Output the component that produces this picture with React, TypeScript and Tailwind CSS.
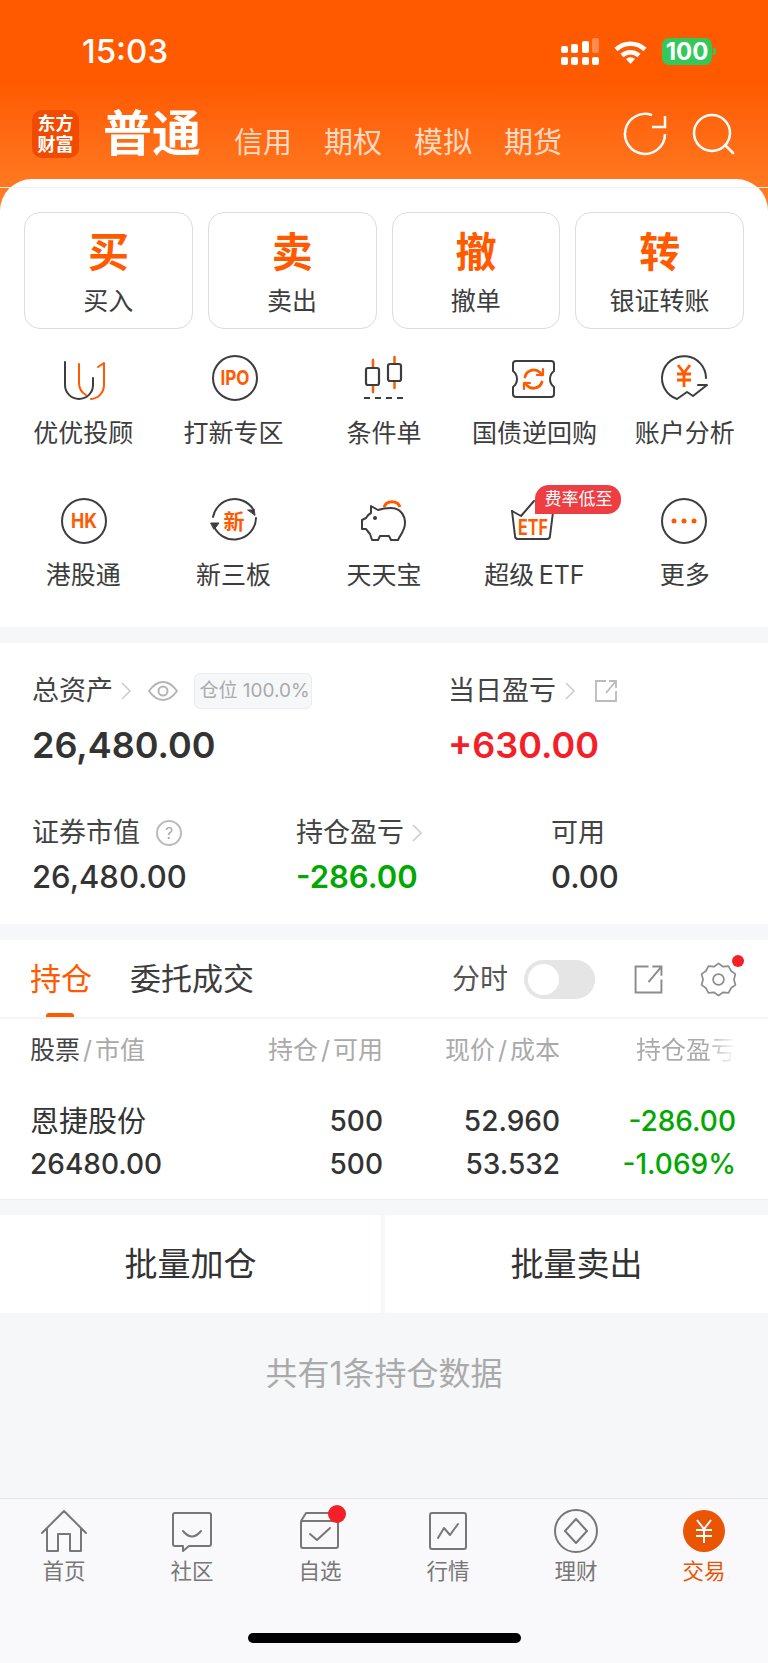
import { type ReactNode } from 'react';

const ink = '#3d3d3d';
const orange = '#ff5a00';
const gray = '#777777';

function Icon({ size = 48, children }: { size?: number; children: ReactNode }) {
    return (
        <svg width={size} height={size} viewBox={`0 0 ${size} ${size}`} fill="none" strokeLinecap="round" strokeLinejoin="round" overflow="visible">
            {children}
        </svg>
    );
}

function Glyph({ x = 24, y = 24, size, width, children }: { x?: number; y?: number; size: number; width?: number; children: string }) {
    return (
        <text
            x={x}
            y={y}
            fontSize={size}
            fontWeight={700}
            fill={orange}
            textAnchor="middle"
            dominantBaseline="central"
            fontFamily="Inter, 'Noto Sans CJK SC', sans-serif"
            textLength={width}
            lengthAdjust={width ? 'spacingAndGlyphs' : undefined}
        >
            {children}
        </text>
    );
}

function Chevron() {
    return (
        <svg width="12" height="22" viewBox="0 0 12 22" fill="none" stroke="#cccccc" strokeWidth="1.6">
            <path d="M2 3l8 8-8 8" />
        </svg>
    );
}

function ShareIcon({ size, color }: { size: number; color: string }) {
    return (
        <svg width={size} height={size} viewBox="0 0 24 24" fill="none" stroke={color} strokeWidth={size > 26 ? 1.5 : 1.8}>
            <path d="M12 2H2v20h20V12" />
            <path d="M12 14L22 2M15 2h7v7" />
        </svg>
    );
}

const shortcuts = [
    { big: '买', label: '买入' },
    { big: '卖', label: '卖出' },
    { big: '撤', label: '撤单' },
    { big: '转', label: '银证转账' },
];

const tools: { label: string; badge?: string; icon: ReactNode }[] = [
    {
        label: '优优投顾',
        icon: (
            <Icon>
                <path d="M6 7V30a14 14 0 0 0 28 0V23" stroke={ink} strokeWidth="2" />
                <path d="M20 9V28q0 8 7 12" stroke={orange} strokeWidth="2" />
                <path d="M39 12l6-4V30a14 14 0 0 1-13 14" stroke={orange} strokeWidth="2" />
            </Icon>
        ),
    },
    {
        label: '打新专区',
        icon: (
            <Icon>
                <circle cx="25" cy="23" r="22" stroke={ink} strokeWidth="2" />
                <Glyph x={25} y={23} size={20} width={29}>IPO</Glyph>
            </Icon>
        ),
    },
    {
        label: '条件单',
        icon: (
            <Icon>
                <path d="M13 5V37M34.500 2V33" stroke={orange} strokeWidth="2.500" />
                <rect x="6" y="13" width="13" height="17" rx="2" fill="white" stroke={ink} strokeWidth="2.200" />
                <rect x="28" y="9" width="13" height="17" rx="2" fill="white" stroke={ink} strokeWidth="2.200" />
                <path d="M4 43H44" stroke={ink} strokeWidth="2" strokeDasharray="6 5" strokeLinecap="butt" />
            </Icon>
        ),
    },
    {
        label: '国债逆回购',
        icon: (
            <Icon>
                <path d="M6 6H41q3 0 3 3v7q-4 3-4 8t4 8v7q0 3-3 3H6q-3 0-3-3v-7q4-3 4-8t-4-8V9q0-3 3-3z" stroke={ink} strokeWidth="2" />
                <path d="M15 22a9 9 0 0 1 15-4.500l2 2.500" stroke={orange} strokeWidth="2.800" />
                <path d="M32 27a9 9 0 0 1-15 3.500l-2-2.500" stroke={orange} strokeWidth="2.800" />
                <path d="M33 14v6h-6M14 34v-6h6" stroke={orange} strokeWidth="2.200" />
            </Icon>
        ),
    },
    {
        label: '账户分析',
        icon: (
            <Icon>
                <path d="M45 23A22 22 0 1 0 16 44L26 37L32 41L46 30H37" stroke={ink} strokeWidth="2" />
                <path d="M17 10l6 8 6-8M23 18V32M16 19H30M16 25H30" stroke={orange} strokeWidth="2.800" strokeLinecap="butt" strokeLinejoin="miter" />
            </Icon>
        ),
    },
    {
        label: '港股通',
        icon: (
            <Icon>
                <circle cx="25" cy="24" r="22" stroke={ink} strokeWidth="2" />
                <Glyph x={25} y={24} size={20} width={26}>HK</Glyph>
            </Icon>
        ),
    },
    {
        label: '新三板',
        icon: (
            <Icon>
                <path d="M3 27A22 22 0 0 0 46 21" stroke={ink} strokeWidth="2" />
                <path d="M3 20A22 22 0 0 1 43 12" stroke={ink} strokeWidth="2" />
                <path d="M38 13l6 0 0-1 1 6z" fill={ink} stroke={ink} strokeWidth="1" />
                <path d="M1 26l8 0-3 4-2 2z" fill={ink} stroke={ink} strokeWidth="1" />
                <Glyph x={24} y={24} size={21}>新</Glyph>
            </Icon>
        ),
    },
    {
        label: '天天宝',
        icon: (
            <Icon>
                <path d="M24 10a8.500 8 0 0 1 16 0" stroke={orange} strokeWidth="3" strokeLinecap="butt" />
                <path d="M11 9L18 13C22 11.500 27 11 31 11C40 11 45 18 45 26C45 32 42 36 39 41L38 43H31L29 39H20L18 43H12L10 37C8 35 7 33 6 32H2V23L6 21C7 19 9 17 11 16Z" fill="white" stroke={ink} strokeWidth="2" />
                <circle cx="15" cy="21" r="2" fill={ink} />
            </Icon>
        ),
    },
    {
        label: '超级\u2009ETF',
        badge: '费率低至',
        icon: (
            <Icon>
                <path d="M2 14L11 19L24 4" stroke={ink} strokeWidth="2" />
                <path d="M2 14L5 39q0 3 3 3H37q3 0 3-3L43 15" stroke={ink} strokeWidth="2" />
                <Glyph x={23} y={30} size={21} width={30}>ETF</Glyph>
            </Icon>
        ),
    },
    {
        label: '更多',
        icon: (
            <Icon>
                <circle cx="23" cy="24" r="22" stroke={ink} strokeWidth="2" />
                <circle cx="13" cy="24" r="2.500" fill={orange} />
                <circle cx="23" cy="24" r="2.500" fill={orange} />
                <circle cx="33" cy="24" r="2.500" fill={orange} />
            </Icon>
        ),
    },
];

const tabs: { label: string; active?: boolean; icon: ReactNode }[] = [
    {
        label: '首页',
        icon: (
            <Icon>
                <path d="M2 26L24 4L46 26M7 21V44H18V27H30V44H41V21" stroke={gray} strokeWidth="2" />
            </Icon>
        ),
    },
    {
        label: '社区',
        icon: (
            <Icon>
                <path d="M7 6H41q2 0 2 2V37q0 2-2 2H21L15 44V39H7q-2 0-2-2V8q0-2 2-2z" stroke={gray} strokeWidth="2" />
                <path d="M15 24q9 11 18 0" stroke={gray} strokeWidth="2" />
            </Icon>
        ),
    },
    {
        label: '自选',
        icon: (
            <Icon>
                <rect x="5" y="14" width="37" height="27" rx="2" stroke={gray} strokeWidth="2" />
                <path d="M5 14L10 6H40" stroke={gray} strokeWidth="2" />
                <path d="M14 27L21 33L34 21" stroke={gray} strokeWidth="2" />
                <circle cx="41" cy="7" r="9" fill="#f32027" />
            </Icon>
        ),
    },
    {
        label: '行情',
        icon: (
            <Icon>
                <rect x="6" y="6" width="36" height="36" rx="2" stroke={gray} strokeWidth="2" />
                <path d="M14 31L20 21L26 28L34 17" stroke={gray} strokeWidth="2" />
            </Icon>
        ),
    },
    {
        label: '理财',
        icon: (
            <Icon>
                <circle cx="24" cy="24" r="21" stroke={gray} strokeWidth="2" />
                <path d="M24 12L35 24L24 36L13 24Z" stroke={gray} strokeWidth="2" />
            </Icon>
        ),
    },
    {
        label: '交易',
        active: true,
        icon: (
            <Icon>
                <circle cx="24" cy="24" r="21" fill="#ea5504" />
                <path d="M17 13l7 9 7-9M24 22V36M16 23H32M16 29H32" stroke="white" strokeWidth="2" strokeLinecap="butt" strokeLinejoin="miter" />
            </Icon>
        ),
    },
];

function StatusBar() {
    return (
        <div className="flex h-[104px] items-center justify-between pb-[1px] pl-[82px] pr-[52px] text-white">
            <span className="text-[33px] font-medium leading-none">15:03</span>
            <div className="flex items-center gap-[15px]">
                <svg width="38" height="27" viewBox="0 0 38 27" fill="white">
                    <rect x="0" y="8" width="7" height="7" rx="2" />
                    <rect x="10" y="6" width="7" height="9" rx="2" />
                    <rect x="21" y="3" width="7" height="12" rx="2" />
                    <rect x="31" y="0" width="7" height="15" rx="2" fillOpacity="0.3" />
                    <rect x="0" y="19" width="7" height="8" rx="2" />
                    <rect x="10" y="19" width="7" height="8" rx="2" />
                    <rect x="21" y="19" width="7" height="8" rx="2" />
                    <rect x="31" y="19" width="7" height="8" rx="2" />
                </svg>
                <svg width="33" height="24" viewBox="0 0 33 24" fill="none" stroke="white" strokeWidth="4.500">
                    <path d="M2 9.500a21 21 0 0 1 29 0" />
                    <path d="M8 15.500a12.500 12.500 0 0 1 17 0" />
                    <path d="M16.500 24l-4.500-5a6.500 6.500 0 0 1 9 0z" fill="white" stroke="none" />
                </svg>
                <div className="flex items-center gap-[1px]">
                    <div className="flex h-[27px] w-[50px] items-center justify-center rounded-[7px] bg-[#34c759] text-[24px] font-bold leading-none text-white">
                        100
                    </div>
                    <div className="h-[7px] w-[3px] rounded-r-[2px] bg-[#34c759]" />
                </div>
            </div>
        </div>
    );
}

function TopNav() {
    return (
        <div className="flex items-start pl-[32px] text-white">
            <div className="mt-[6px] flex h-[48px] w-[47px] flex-col items-center justify-center rounded-[10px] bg-[#f04b00] text-[18px] font-bold leading-[21px]">
                <span>东方</span>
                <span>财富</span>
            </div>
            <span className="ml-[24px] mt-[2px] text-[49px] font-bold leading-[56px]">普通</span>
            <div className="ml-[33px] mt-[22px] flex gap-[32px] text-[29px] leading-[34px] text-white/75">
                <span>信用</span>
                <span>期权</span>
                <span>模拟</span>
                <span>期货</span>
            </div>
            <div className="ml-[61px] mt-[8px]">
                <Icon size={44}>
                    <path d="M42 22A20 20 0 1 1 29 3.200" stroke="white" strokeWidth="2.500" strokeLinecap="butt" />
                    <path d="M29 15H42V4" stroke="white" strokeWidth="2.500" strokeLinecap="butt" strokeLinejoin="miter" />
                </Icon>
            </div>
            <div className="ml-[23px] mt-[7px]">
                <Icon size={46}>
                    <circle cx="22" cy="22" r="18" stroke="white" strokeWidth="2.500" />
                    <path d="M35 34L43 42" stroke="white" strokeWidth="2.500" />
                </Icon>
            </div>
        </div>
    );
}

function Actions() {
    return (
        <div className="relative -mt-[32px] rounded-t-[32px] bg-white pb-[37px]">
            <div className="h-[8px]" />
            <div className="h-[1px] bg-[#f1f1f1]" />
            <div className="grid grid-cols-4 gap-[15px] px-[24px] pt-[24px]">
                {shortcuts.map((s) => (
                    <div key={s.big} className="flex h-[117px] flex-col items-center rounded-[16px] border border-[#dcdcdc] pt-[14px]">
                        <span className="text-[41px] font-bold leading-[50px] text-[#ff5a00]">{s.big}</span>
                        <span className="mt-[8px] text-[25px] leading-[32px] text-[#3d3d3d]">{s.label}</span>
                    </div>
                ))}
            </div>
            <div className="mt-[26px] grid grid-cols-5 gap-y-[49px] px-[8px]">
                {tools.map((t) => (
                    <div key={t.label} className="flex flex-col items-center">
                        <div className="relative">
                            {t.icon}
                            {t.badge && (
                                <span className="absolute left-[25px] top-[-12px] whitespace-nowrap rounded-[14px] rounded-bl-none bg-[#ee3d43] px-[9px] text-[17px] leading-[29px] text-white">
                                    {t.badge}
                                </span>
                            )}
                        </div>
                        <span className="mt-[15px] whitespace-nowrap text-[25px] leading-[30px] text-[#3d3d3d]">{t.label}</span>
                    </div>
                ))}
            </div>
        </div>
    );
}

function Assets() {
    return (
        <div className="mt-[16px] bg-white px-[32px] pb-[27px] pt-[33px]">
            <div className="grid grid-cols-[416px_1fr]">
                <div>
                    <div className="flex h-[30px] items-center text-[27px] leading-[30px] text-[#444]">
                        <span>总资产</span>
                        <span className="ml-[7px]"><Chevron /></span>
                        <svg className="ml-[16px]" width="30" height="22" viewBox="0 0 30 22" fill="none" stroke="#b5b5b5" strokeWidth="2">
                            <path d="M1 11C6 4 10 2 15 2s9 2 14 9c-5 7-9 9-14 9S6 18 1 11z" />
                            <circle cx="15" cy="11" r="4.500" />
                        </svg>
                        <span className="ml-[16px] flex h-[36px] w-[118px] items-center justify-center whitespace-nowrap rounded-[6px] border border-[#ececec] bg-[#f6f7f9] pl-[3px] text-[19px] text-[#aaa]">
                            仓位 100.0%
                        </span>
                    </div>
                    <div className="mt-[17px] text-[36px] font-semibold leading-[44px] text-[#333]">26,480.00</div>
                </div>
                <div>
                    <div className="flex h-[30px] items-center text-[27px] leading-[30px] text-[#444]">
                        <span>当日盈亏</span>
                        <span className="ml-[8px]"><Chevron /></span>
                        <span className="ml-[18px]"><ShareIcon size={24} color="#bbbbbb" /></span>
                    </div>
                    <div className="mt-[17px] text-[36px] font-semibold leading-[44px] text-[#f32027]">+630.00</div>
                </div>
            </div>
            <div className="mt-[51px] grid grid-cols-[264px_255px_1fr]">
                <div>
                    <div className="flex h-[30px] items-center text-[27px] leading-[30px] text-[#444]">
                        <span>证券市值</span>
                        <span className="ml-[16px] flex h-[26px] w-[26px] items-center justify-center rounded-full border-2 border-[#bbb] text-[16px] text-[#aaa]">?</span>
                    </div>
                    <div className="mt-[9px] text-[31px] font-medium leading-[40px] text-[#333]">26,480.00</div>
                </div>
                <div>
                    <div className="flex h-[30px] items-center text-[27px] leading-[30px] text-[#444]">
                        <span>持仓盈亏</span>
                        <span className="ml-[7px]"><Chevron /></span>
                    </div>
                    <div className="mt-[9px] text-[31px] font-semibold leading-[40px] text-[#00a800]">-286.00</div>
                </div>
                <div>
                    <div className="h-[30px] text-[27px] leading-[30px] text-[#444]">可用</div>
                    <div className="mt-[9px] text-[31px] font-medium leading-[40px] text-[#333]">0.00</div>
                </div>
            </div>
        </div>
    );
}

function Slash() {
    return <span className="mx-[3px]">/</span>;
}

function Holdings() {
    return (
        <div className="mt-[16px] bg-white">
            <div className="flex h-[77px] items-center pl-[30px] pr-[31px] pt-[1px]">
                <span className="relative text-[31px] leading-[40px] text-[#ff5a00]">
                    持仓
                    <span className="absolute bottom-[-18px] left-[16px] h-[4px] w-[28px] rounded-t-[3px] bg-[#ff5a00]" />
                </span>
                <span className="ml-[38px] text-[31px] leading-[40px] text-[#3d3d3d]">委托成交</span>
                <span className="ml-auto text-[28px] leading-[40px] text-[#555]">分时</span>
                <div className="ml-[16px] flex h-[39px] w-[71px] items-center rounded-full bg-[#e5e5e5] pl-[4px]">
                    <div className="h-[31px] w-[31px] rounded-full bg-white" />
                </div>
                <span className="ml-[38px]"><ShareIcon size={31} color="#8c8c8c" /></span>
                <div className="relative ml-[36px]">
                    <svg width="37" height="37" viewBox="0 0 24 24" fill="none" stroke="#8c8c8c" strokeWidth="1.100" strokeLinejoin="round">
                        <path d="M12 1.500l3 2.200 3.500-.4 1.700 3.200 2.800 2-1 3.500 1 3.500-2.800 2-1.700 3.200-3.500-.4-3 2.200-3-2.200-3.500.4-1.700-3.200-2.800-2 1-3.500-1-3.500 2.800-2 1.700-3.200 3.500.4z" />
                        <circle cx="12" cy="12" r="3.500" />
                    </svg>
                    <span className="absolute right-[-7px] top-[-6px] h-[12px] w-[12px] rounded-full bg-[#f32027]" />
                </div>
            </div>
            <div className="h-[2px] bg-[#f5f5f5]" />
            <div className="grid h-[64px] grid-cols-[202px_151px_177px_176px] items-center pb-[2px] pl-[30px] text-[25px] leading-[30px] text-[#aaa]">
                <span className="whitespace-nowrap"><span className="text-[#444]">股票</span><Slash />市值</span>
                <span className="justify-self-end whitespace-nowrap">持仓<Slash />可用</span>
                <span className="justify-self-end whitespace-nowrap">现价<Slash />成本</span>
                <span className="justify-self-end whitespace-nowrap bg-gradient-to-r from-[#aaa] from-70% to-white/60 bg-clip-text text-transparent">持仓盈亏</span>
            </div>
            <div className="grid grid-cols-[202px_151px_177px_176px] pb-[13px] pl-[30px] pt-[17px] text-[28px] font-medium leading-[43px] text-[#333]">
                <span className="text-[29px] font-normal">恩捷股份</span>
                <span className="text-right">500</span>
                <span className="text-right">52.960</span>
                <span className="text-right text-[#00a800]">-286.00</span>
                <span>26480.00</span>
                <span className="text-right">500</span>
                <span className="text-right">53.532</span>
                <span className="text-right text-[#00a800]">-1.069%</span>
            </div>
            <div className="h-[1px] bg-[#eeeeee]" />
        </div>
    );
}

function BottomTabs() {
    return (
        <div className="h-[165px] border-t border-[#e4e4e4] bg-[#f9f9fb]">
            <div className="grid grid-cols-6 pt-[8px]">
                {tabs.map((t) => (
                    <div key={t.label} className="flex flex-col items-center">
                        {t.icon}
                        <span className={`mt-[2px] text-[21.500px] leading-[28px] ${t.active ? 'text-[#ea5504]' : 'text-[#777]'}`}>{t.label}</span>
                    </div>
                ))}
            </div>
            <div className="mx-auto mt-[48px] h-[10px] w-[273px] rounded-full bg-black" />
        </div>
    );
}

export default function App() {
    return (
        <div
            className="flex h-[1663px] w-[768px] flex-col overflow-hidden bg-[#f6f7f9]"
            style={{ fontFamily: "Inter, 'Noto Sans CJK SC', sans-serif" }}
        >
            <div className="h-[211px] bg-gradient-to-b from-[#ff5a00] via-[#ff5a00] via-40% to-[#ff7f24]">
                <StatusBar />
                <TopNav />
            </div>
            <Actions />
            <Assets />
            <Holdings />
            <div className="mt-[15px] grid grid-cols-[381px_383px] gap-[4px]">
                <div className="flex h-[98px] items-center justify-center bg-white pt-[2px] text-[33px] text-[#333]">批量加仓</div>
                <div className="flex h-[98px] items-center justify-center bg-white pt-[2px] text-[33px] text-[#333]">批量卖出</div>
            </div>
            <div className="flex-1 pt-[44px] text-center text-[32px] leading-[34px] text-[#aaa]">共有1条持仓数据</div>
            <BottomTabs />
        </div>
    );
}
